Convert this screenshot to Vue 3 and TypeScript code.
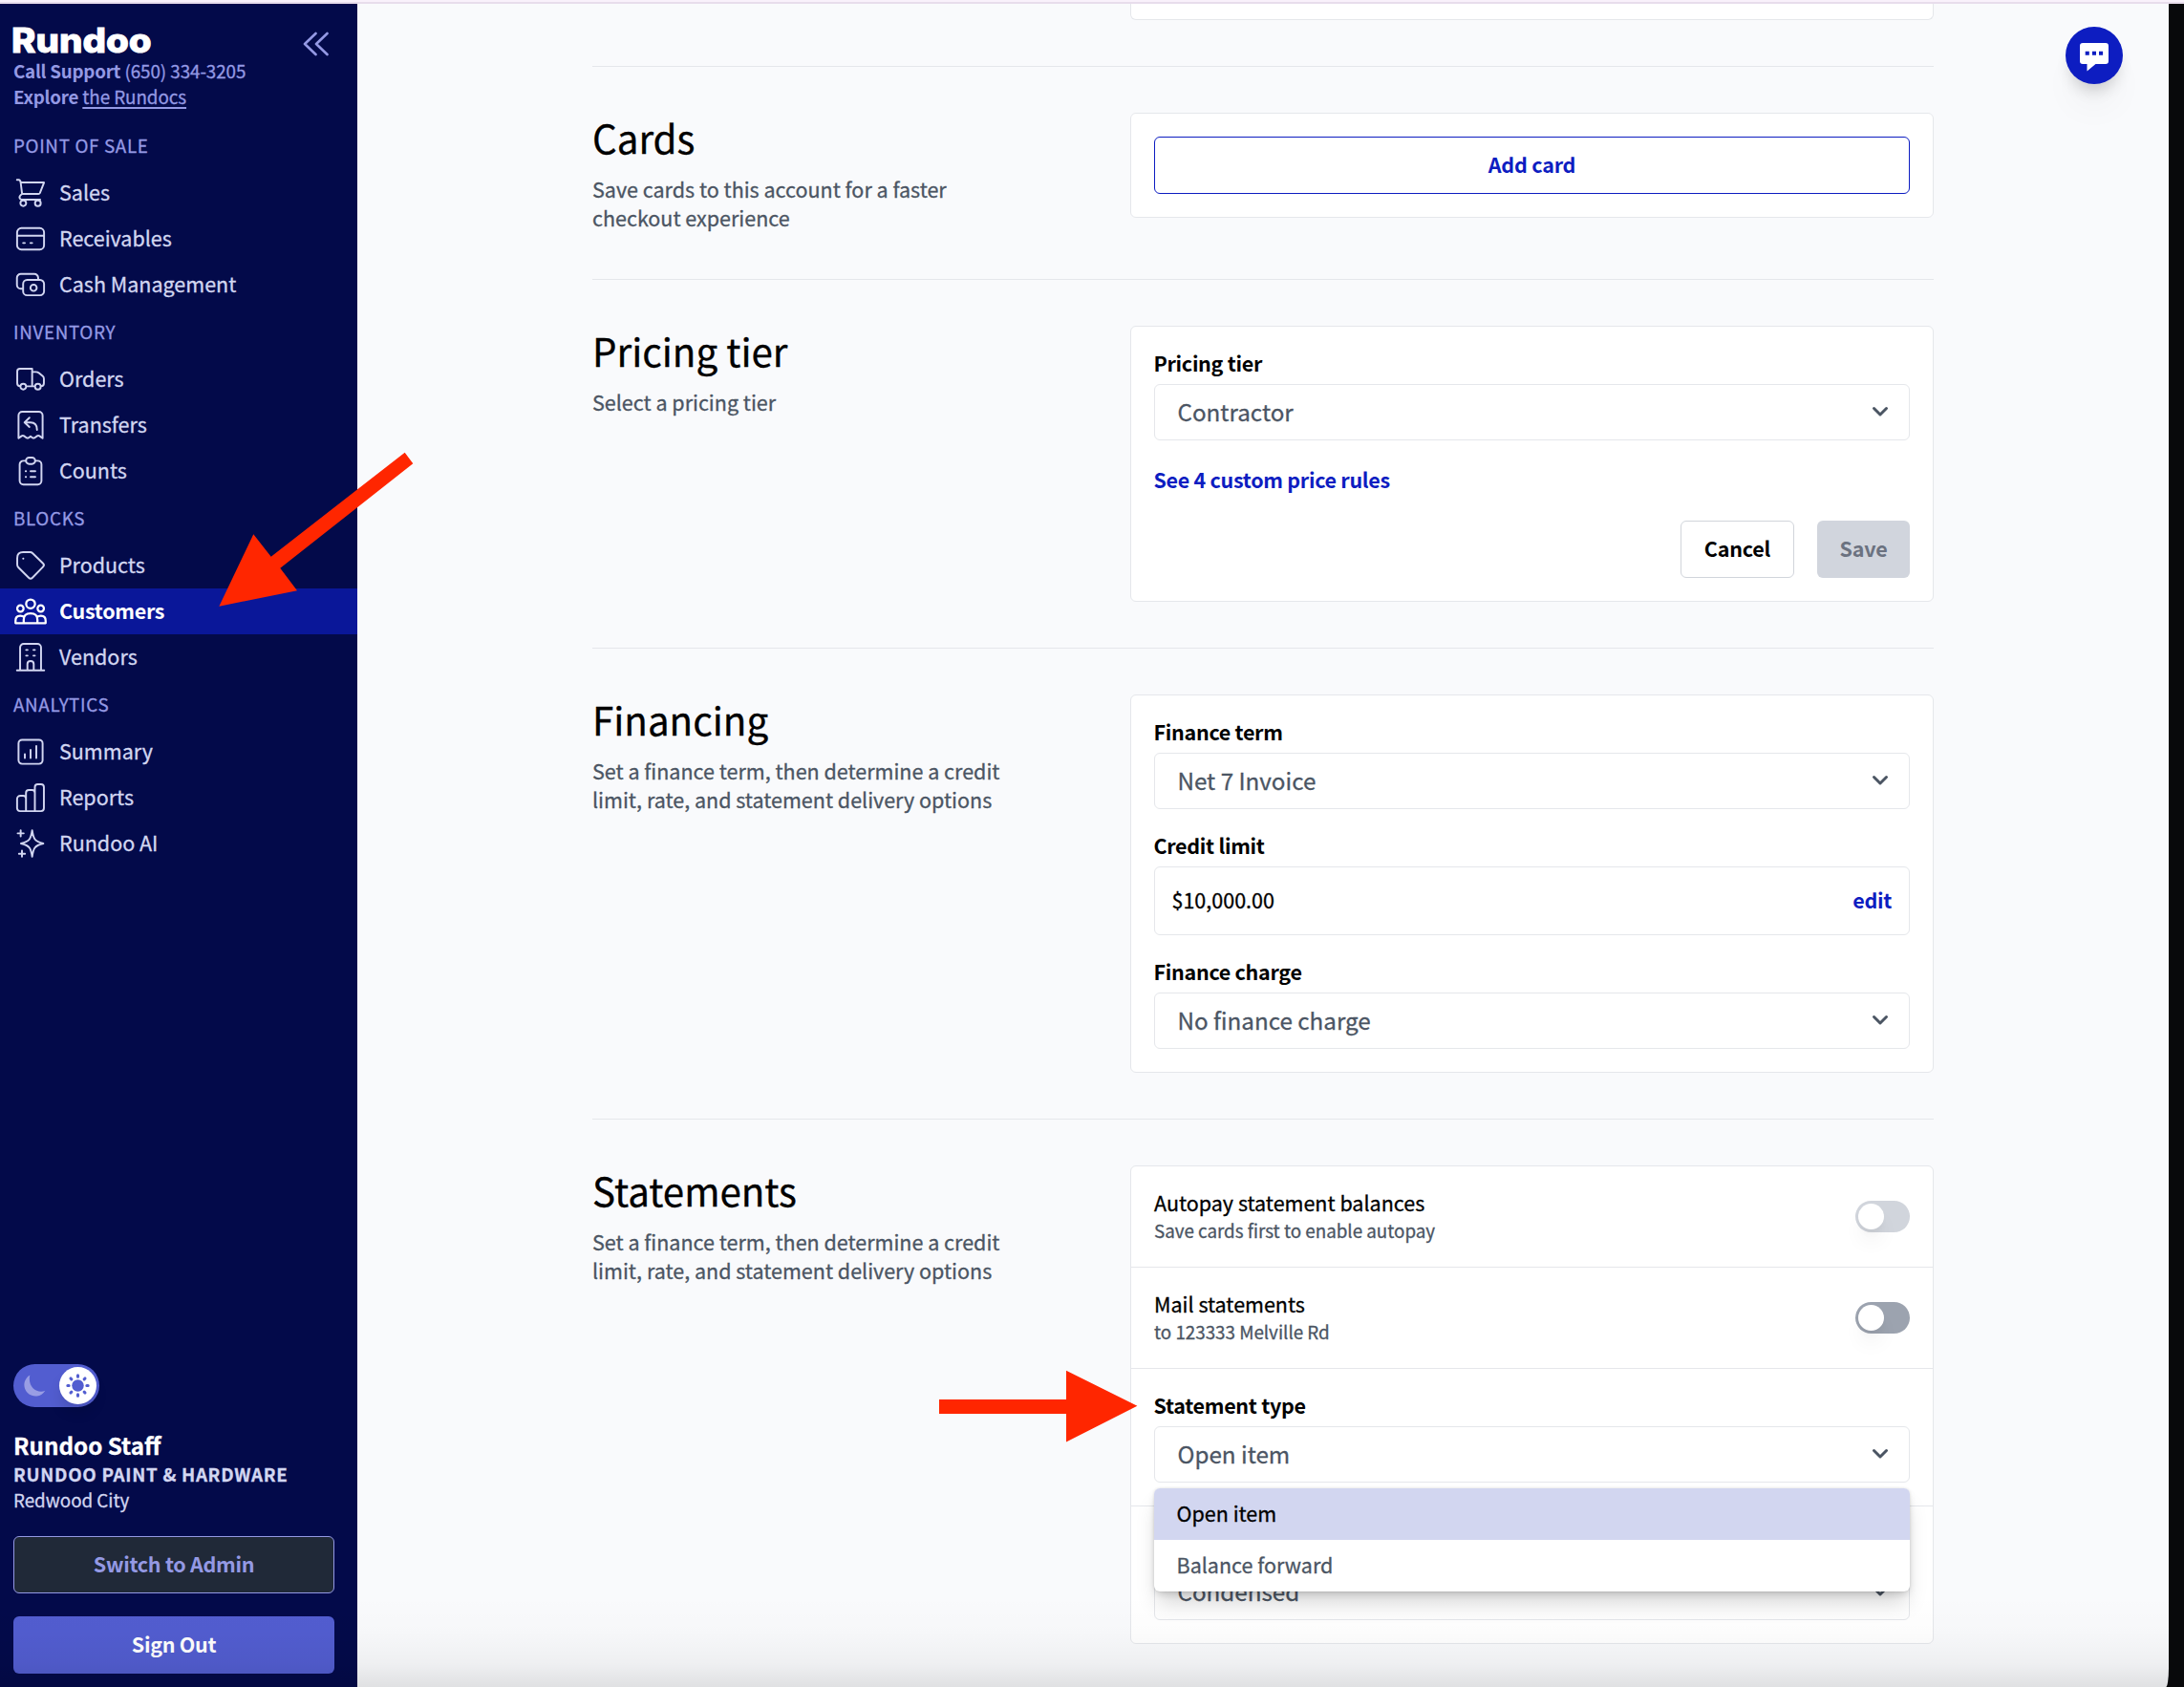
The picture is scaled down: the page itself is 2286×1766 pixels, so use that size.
<template>
  <div class="window">
    <div class="titlebar-edge" />
    <div class="app-shell">
      <aside class="sidebar">
        <header class="brand">
          <div class="brand-row">
            <span class="logo">Rundoo</span>
            <svg class="collapse" viewBox="0 0 28 26" aria-hidden="true">
              <path d="M14.5 2 3 13l11.500 11M26.500 2 15 13l11.500 11" />
            </svg>
          </div>
          <p class="brand-line"><b>Call Support</b> (650) 334-3205</p>
          <p class="brand-line"><b>Explore</b> <a class="docs-link">the Rundocs</a></p>
        </header>

        <nav class="nav">
          <section v-for="group in navGroups" :key="group.title">
            <h3 class="nav-title">{{ group.title }}</h3>
            <a
              v-for="item in group.items"
              :key="item.label"
              class="nav-item"
              :class="{ active: item.label === activeItem }"
            >
              <svg class="nav-icon" viewBox="0 0 24 24" aria-hidden="true">
                <path :d="item.icon" />
              </svg>
              <span>{{ item.label }}</span>
            </a>
          </section>
        </nav>

        <footer class="account">
          <div class="theme-toggle">
            <svg class="moon" viewBox="0 0 24 24" aria-hidden="true">
              <path d="M7.300.500A11.800 11.800 0 1 0 23.300 16.800C15 20.500 4.500 12.500 7.300.500z" />
            </svg>
            <span class="theme-knob">
              <svg viewBox="0 0 24 24" aria-hidden="true">
                <circle cx="12" cy="12" r="6" />
                <path
                  d="M12 1.800v1.200M12 21v1.200M1.800 12H3M21 12h1.200M4.800 4.800l.8.8M18.400 18.400l.8.8M4.800 19.200l.8-.8M18.400 5.600l.8-.8"
                />
              </svg>
            </span>
          </div>
          <p class="user-name">Rundoo Staff</p>
          <p class="store-name">RUNDOO PAINT &amp; HARDWARE</p>
          <p class="store-city">Redwood City</p>
          <button class="side-btn side-btn-outline">Switch to Admin</button>
          <button class="side-btn side-btn-solid">Sign Out</button>
        </footer>
      </aside>

      <main class="content">
        <div class="settings">
          <section class="setting previous">
            <div class="card" />
          </section>

          <section class="setting">
            <div class="intro">
              <h2>Cards</h2>
              <p>Save cards to this account for a faster checkout experience</p>
            </div>
            <div class="card card-padded">
              <button class="btn btn-primary-outline">Add card</button>
            </div>
          </section>

          <section class="setting">
            <div class="intro">
              <h2>Pricing tier</h2>
              <p>Select a pricing tier</p>
            </div>
            <div class="card card-padded">
              <label class="field-label">Pricing tier</label>
              <div class="select">
                <span>Contractor</span>
                <svg class="chevron" viewBox="0 0 18 12"><path d="M2.500 2.500 9 9l6.500-6.500" /></svg>
              </div>
              <a class="rules-link">See 4 custom price rules</a>
              <div class="actions">
                <button class="btn btn-cancel">Cancel</button>
                <button class="btn btn-save" disabled>Save</button>
              </div>
            </div>
          </section>

          <section class="setting">
            <div class="intro">
              <h2>Financing</h2>
              <p>Set a finance term, then determine a credit limit, rate, and statement delivery options</p>
            </div>
            <div class="card card-padded card-stack">
              <div>
                <label class="field-label">Finance term</label>
                <div class="select">
                  <span>Net 7 Invoice</span>
                  <svg class="chevron" viewBox="0 0 18 12"><path d="M2.500 2.500 9 9l6.500-6.500" /></svg>
                </div>
              </div>
              <div>
                <label class="field-label">Credit limit</label>
                <div class="limit-box">
                  <span>$10,000.00</span>
                  <a class="edit-link">edit</a>
                </div>
              </div>
              <div>
                <label class="field-label">Finance charge</label>
                <div class="select">
                  <span>No finance charge</span>
                  <svg class="chevron" viewBox="0 0 18 12"><path d="M2.500 2.500 9 9l6.500-6.500" /></svg>
                </div>
              </div>
            </div>
          </section>

          <section class="setting">
            <div class="intro">
              <h2>Statements</h2>
              <p>Set a finance term, then determine a credit limit, rate, and statement delivery options</p>
            </div>
            <div class="card">
              <div v-for="row in toggleRows" :key="row.title" class="card-row toggle-row">
                <div>
                  <p class="row-title">{{ row.title }}</p>
                  <p class="row-note">{{ row.note }}</p>
                </div>
                <span class="switch" :class="{ disabled: row.disabled }"><i class="knob" /></span>
              </div>
              <div class="card-row">
                <label class="field-label">Statement type</label>
                <div class="select select-open">
                  <span>{{ statementType }}</span>
                  <svg class="chevron" viewBox="0 0 18 12"><path d="M2.500 2.500 9 9l6.500-6.500" /></svg>
                  <ul class="menu">
                    <li
                      v-for="option in statementTypes"
                      :key="option"
                      :class="{ selected: option === statementType }"
                      @click="statementType = option"
                    >
                      {{ option }}
                    </li>
                  </ul>
                </div>
              </div>
              <div class="card-row format-row">
                <div class="select">
                  <span>Condensed</span>
                  <svg class="chevron" viewBox="0 0 18 12"><path d="M2.500 2.500 9 9l6.500-6.500" /></svg>
                </div>
              </div>
            </div>
          </section>
        </div>

        <button class="chat" aria-label="Chat">
          <svg viewBox="0 0 30 30" aria-hidden="true">
            <path
              fill-rule="evenodd"
              d="M3 0h24a3 3 0 0 1 3 3v16a3 3 0 0 1-3 3H16.500L7.500 29.500V22H3a3 3 0 0 1-3-3V3a3 3 0 0 1 3-3zM5.700 8.700v4.100h4.100V8.700zM12.900 8.700v4.100H17V8.700zM20 8.700v4.100h4.100V8.700z"
            />
          </svg>
        </button>
      </main>
    </div>
    <div class="bottom-fade" />

    <svg class="annotations" viewBox="0 0 2286 1766" aria-hidden="true">
      <polygon
        points="229.300,634.700 265.300,559.300 283.700,582.700 423.700,473.700 432.300,485.300 293.300,594.700 311,618.300"
      />
      <polygon points="983,1465 1116,1465 1116,1434.700 1190.400,1471.800 1116,1509.400 1116,1480 983,1480" />
    </svg>
  </div>
</template>

<script setup lang="ts">
import { ref } from "vue";

interface NavItem {
  label: string;
  /** Stroke path on a 24x24 grid */
  icon: string;
}

interface NavGroup {
  title: string;
  items: NavItem[];
}

interface ToggleRow {
  title: string;
  note: string;
  disabled?: boolean;
}

const activeItem = ref("Customers");

const navGroups: NavGroup[] = [
  {
    title: "POINT OF SALE",
    items: [
      {
        label: "Sales",
        icon: "M2.500 2.800h1.200c.9 0 1.200.4 1.400 1.900l1 8h11.500c.5 0 .7-.2.900-.6l2.900-7.400H5.100M6.100 12.700c-1.500 1-2 1.800-1.800 2.700.2.800.8 1.300 1.600 1.300h12.800M4.900 19.100a2 2 0 1 0 4 0a2 2 0 1 0-4 0M15.100 19.100a2 2 0 1 0 4 0a2 2 0 1 0-4 0",
      },
      {
        label: "Receivables",
        icon: "M5.600 4.500h12.800a3 3 0 0 1 3 3v9a3 3 0 0 1-3 3H5.600a3 3 0 0 1-3-3v-9a3 3 0 0 1 3-3zM2.600 9.800h18.800M6.800 14.900h1.200M11.900 14.900h1.200",
      },
      {
        label: "Cash Management",
        icon: "M9.600 8.700h9a2.800 2.800 0 0 1 2.800 2.800v5.100a2.800 2.800 0 0 1-2.800 2.800h-9a2.800 2.800 0 0 1-2.800-2.800v-5.100a2.800 2.800 0 0 1 2.800-2.800zM6.800 14.800H5.200a2.700 2.700 0 0 1-2.700-2.700V7.200a2.700 2.700 0 0 1 2.700-2.700h9.400a2.700 2.700 0 0 1 2.700 2.700v1.500M11.900 14.200a2.200 2.200 0 1 0 4.400 0a2.200 2.200 0 1 0-4.400 0",
      },
    ],
  },
  {
    title: "INVENTORY",
    items: [
      {
        label: "Orders",
        icon: "M4.900 16.900c-1.600 0-2.200-.6-2.200-2V6.500c0-1.200.6-1.800 1.800-1.800h8.600v12.200M13.100 6.900h2.600c.9 0 1.500.2 2.200.8l2.600 2.200c.6.5.8 1 .8 1.700v3.300c0 1.400-.6 2-2.100 2M8.900 16.900h6.200M4.900 17.100a2 2 0 1 0 4 0a2 2 0 1 0-4 0M15.100 17.100a2 2 0 1 0 4 0a2 2 0 1 0-4 0",
      },
      {
        label: "Transfers",
        icon: "M3.600 21.200V5.300a2.600 2.600 0 0 1 2.600-2.600h11.600a2.600 2.600 0 0 1 2.600 2.600v15.900l-2.200-1.600c-.6-.4-1-.4-1.600 0l-1.700 1.200c-.6.4-1 .4-1.600 0l-1.300-.9-1.300.9c-.6.4-1 .4-1.600 0l-1.700-1.200c-.6-.4-1-.4-1.600 0zM11.200 6.800 7.800 10.200l3.400 3.100M7.800 10.200H12c2.900 0 4.500 1.800 4.500 5.100",
      },
      {
        label: "Counts",
        icon: "M8.900 4.900H7a2.600 2.600 0 0 0-2.600 2.600v11.400A2.600 2.600 0 0 0 7 21.500h10a2.600 2.600 0 0 0 2.600-2.600V7.500A2.600 2.600 0 0 0 17 4.900h-1.900M11 2.600h2a2.200 2.200 0 0 1 0 4.500h-2a2.200 2.200 0 0 1 0-4.500zM8.600 12.100h.2M12 12.100h3.300M8.600 16.200h.2M12 16.200h3.300",
      },
    ],
  },
  {
    title: "BLOCKS",
    items: [
      {
        label: "Products",
        icon: "M2.700 6.800c0-2.700 1.400-4.100 4.100-4.100h4.800c.8 0 1.300.2 1.900.8l7.200 7c.8.8.8 1.600 0 2.400l-7.400 7.600c-.9.900-1.700.9-2.600 0l-7.200-7.200c-.6-.6-.8-1.100-.8-1.900zM6.850 7.100h.1",
      },
      {
        label: "Customers",
        icon: "M8.900 6.800a3.100 3.100 0 1 0 6.200 0a3.100 3.100 0 1 0-6.200 0M2.700 10a2.200 2.200 0 1 0 4.400 0a2.200 2.200 0 1 0-4.400 0M16.900 10a2.200 2.200 0 1 0 4.400 0a2.200 2.200 0 1 0-4.400 0M1.500 20.200v-1.600c0-2.200 1.200-3.500 3.300-3.500 1 0 1.900.2 2.600.9M22.500 20.200v-1.600c0-2.200-1.200-3.500-3.300-3.500-1 0-1.900.2-2.600.9M7.200 20.200v-2.400c0-2.700 1.800-4.400 4.800-4.400s4.800 1.700 4.800 4.400v2.400M1.500 20.200h21",
      },
      {
        label: "Vendors",
        icon: "M4.700 21.100V5.200a2.500 2.500 0 0 1 2.500-2.500h9.600a2.500 2.500 0 0 1 2.500 2.500v15.900M2.500 21.200h19M9.800 21.100v-4.400c0-1.300.6-2 2.200-2s2.200.7 2.200 2v4.400M8.900 6.900h1M14 6.900h1M8.900 10.900h1M14 10.900h1",
      },
    ],
  },
  {
    title: "ANALYTICS",
    items: [
      {
        label: "Summary",
        icon: "M6.100 3.600h11.800a2.500 2.500 0 0 1 2.500 2.500v11.800a2.500 2.500 0 0 1-2.500 2.500H6.100a2.500 2.500 0 0 1-2.500-2.500V6.100a2.500 2.500 0 0 1 2.500-2.500zM8 13.700v2.600M12 10.700v5.600M16 7.900v8.400",
      },
      {
        label: "Reports",
        icon: "M4.900 10.600h1.900a2 2 0 0 1 2 2v8.800H4.600a2 2 0 0 1-2-2v-6.500a2.300 2.300 0 0 1 2.300-2.300zM8.800 12.600V8.700a2 2 0 0 1 2-2h2.200a2 2 0 0 1 2 2v12.700H8.800zM15 8.700V4.700a2 2 0 0 1 2-2h2.300a2 2 0 0 1 2 2v14.700a2 2 0 0 1-2 2H15z",
      },
      {
        label: "Rundoo AI",
        icon: "M13.100 2.800c.9 5.800 1.500 7.700 7.800 9.200-6.300 1.500-6.900 3.400-7.800 9.200-.9-5.800-1.500-7.700-7.800-9.200 6.300-1.500 6.900-3.400 7.800-9.200zM5.100 2.800v4.200M3 4.900h4.200M6 17v4.200M3.900 19.100h4.200",
      },
    ],
  },
];

const toggleRows: ToggleRow[] = [
  {
    title: "Autopay statement balances",
    note: "Save cards first to enable autopay",
    disabled: true,
  },
  { title: "Mail statements", note: "to 123333 Melville Rd" },
];

const statementTypes = ["Open item", "Balance forward"];
const statementType = ref("Open item");
</script>

<style>
body {
  margin: 0;
  background: #08090b;
}
</style>

<style scoped>
.window {
  position: relative;
  display: flex;
  flex-direction: column;
  width: 2286px;
  height: 1766px;
  overflow: hidden;
  background: #08090b;
  color: #000;
  font-family: "Noto Sans CJK SC", "Noto Sans", sans-serif;
  font-size: 21.5px;
  line-height: 30px;
  -webkit-text-stroke: 0.3px currentColor;
}

p,
h2,
h3,
ul {
  margin: 0;
  padding: 0;
  font-weight: 400;
}

button {
  font: inherit;
  margin: 0;
}

.titlebar-edge {
  flex: none;
  box-sizing: border-box;
  height: 4px;
  background: #f9f1fb;
  border-bottom: 2px solid #e8ddec;
}

.app-shell {
  flex: 1;
  min-height: 0;
  display: flex;
  width: 2270px;
  overflow: hidden;
  background: #f9fafc;
  border-bottom-right-radius: 3px 20px;
}

/* Sidebar */
.sidebar {
  flex: none;
  box-sizing: border-box;
  width: 374px;
  display: flex;
  flex-direction: column;
  background: #030a4a;
}

.brand {
  padding: 0 30px 12px 14px;
  color: #9499e4;
}

.brand-row {
  display: flex;
  justify-content: space-between;
  align-items: flex-start;
  height: 57px;
}

.logo {
  margin-left: -2px;
  padding-top: 13px;
  color: #fff;
  font-family: Inter, sans-serif;
  font-weight: 800;
  font-size: 35px;
  line-height: 50px;
  transform: scaleX(1.1);
  transform-origin: left;
  -webkit-text-stroke: 0.9px currentColor;
}

.collapse {
  width: 28px;
  height: 26px;
  margin-top: 29px;
  fill: none;
  stroke: #9499e4;
  stroke-width: 2.6;
  stroke-linecap: round;
  stroke-linejoin: round;
}

.brand-line {
  font-size: 18.8px;
  line-height: 25px;
  padding-bottom: 2px;
  letter-spacing: -0.05px;
}

.brand-line b {
  letter-spacing: -0.25px;
  -webkit-text-stroke: 0;
}

.docs-link {
  text-decoration: underline;
  text-decoration-thickness: 2px;
  text-underline-offset: 3px;
}

.nav-title {
  padding: 12px 14px 14px;
  color: #9499e4;
  font-size: 18.8px;
  line-height: 25px;
  letter-spacing: 0.68px;
}

.nav-item {
  display: flex;
  align-items: center;
  gap: 12px;
  height: 48px;
  padding: 0 14px;
  color: #d2d6f1;
}

.nav-item span {
  padding-bottom: 2px;
}

.nav-item.active {
  background: #0a1799;
  color: #fff;
  font-weight: 700;
  letter-spacing: -0.3px;
  -webkit-text-stroke: 0;
}

.nav-icon {
  width: 36px;
  height: 36px;
  fill: none;
  stroke: currentColor;
  stroke-width: 1.3;
  stroke-linecap: round;
  stroke-linejoin: round;
}

.nav-item.active .nav-icon {
  stroke-width: 1.5;
}

.account {
  display: flex;
  flex-direction: column;
  margin-top: auto;
  padding: 0 24px 14px 14px;
}

.theme-toggle {
  box-sizing: border-box;
  display: flex;
  align-items: center;
  justify-content: space-between;
  width: 90px;
  height: 45px;
  margin-bottom: 24px;
  padding: 3px 3px 3px 10px;
  border-radius: 23px;
  background: #525dd0;
}

.moon {
  width: 24px;
  height: 24px;
  fill: #989de4;
}

.theme-knob {
  display: flex;
  align-items: center;
  justify-content: center;
  width: 39px;
  height: 39px;
  border-radius: 50%;
  background: #fff;
  box-shadow: 0 10px 15px -3px rgba(0, 0, 0, 0.15);
}

.theme-knob svg {
  width: 25px;
  height: 25px;
  fill: #525dd0;
  stroke: #525dd0;
  stroke-linecap: round;
  stroke-width: 3;
}

.theme-knob circle {
  stroke: none;
}

.user-name {
  padding: 1px 0 2px;
  color: #fff;
  font-size: 24.2px;
  font-weight: 700;
  line-height: 30px;
}

.store-name {
  padding-bottom: 2px;
  color: #d2d6f1;
  font-size: 18.8px;
  font-weight: 700;
  line-height: 25px;
  letter-spacing: 0.7px;
}

.store-city {
  padding-bottom: 2px;
  margin-bottom: 24px;
  color: #d2d6f1;
  font-size: 18.8px;
  line-height: 25px;
}

.side-btn {
  box-sizing: border-box;
  height: 60px;
  padding: 0 0 2px;
  border: 0;
  border-radius: 6px;
  font-weight: 700;
  letter-spacing: -0.3px;
  -webkit-text-stroke: 0;
}

.side-btn-outline {
  margin-bottom: 24px;
  border: 1px solid #9499e4;
  background: #202938;
  color: #9499e4;
}

.side-btn-solid {
  background: #525dd0;
  color: #fff;
}

/* Settings */
.content {
  position: relative;
  flex: 1;
}

.settings {
  width: 1404px;
  margin-left: 246px;
}

.setting {
  display: grid;
  grid-template-columns: 563px 841px;
  align-items: start;
  padding: 48px 0;
  border-top: 1px solid #e5e7eb;
}

.setting.previous {
  padding: 0 0 48px;
  border-top: 0;
}

.setting.previous .card {
  grid-column: 2;
  height: 17px;
  border-top: 0;
  border-radius: 0 0 6px 6px;
}

.intro h2 {
  margin-bottom: 11px;
  padding-bottom: 2px;
  font-size: 40.3px;
  line-height: 52px;
}

.intro p {
  width: 440px;
  padding-bottom: 1px;
  color: #4b5563;
}

.card {
  box-sizing: border-box;
  border: 1px solid #e5e7eb;
  border-radius: 6px;
  background: #fff;
}

.card-padded {
  padding: 24px;
}

.card-stack {
  display: grid;
  gap: 24px;
}

.btn {
  box-sizing: border-box;
  height: 60px;
  padding: 0 0 2px;
  border: 1px solid transparent;
  border-radius: 6px;
  background: #fff;
  font-weight: 700;
  letter-spacing: -0.2px;
  -webkit-text-stroke: 0;
}

.btn-primary-outline {
  display: block;
  width: 100%;
  border-color: #0d1dc1;
  color: #0d1dc1;
}

.btn-cancel {
  width: 119px;
  border-color: #d1d5db;
  color: #000;
}

.btn-save {
  width: 97px;
  background: #d1d5dd;
  color: #6b7280;
}

.field-label {
  display: block;
  margin-bottom: 6px;
  margin-left: -0.5px;
  padding-bottom: 2px;
  font-weight: 700;
  line-height: 28px;
  letter-spacing: -0.3px;
  -webkit-text-stroke: 0;
}

.select {
  position: relative;
  box-sizing: border-box;
  display: flex;
  align-items: center;
  justify-content: space-between;
  height: 59px;
  padding: 0 21px 2px 23.5px;
  border: 1px solid #e5e7eb;
  border-radius: 6px;
  color: #4b5563;
  font-size: 24.2px;
}

.chevron {
  width: 18px;
  height: 12px;
  fill: none;
  stroke: #4b5563;
  stroke-width: 3;
  stroke-linecap: round;
  stroke-linejoin: round;
}

.rules-link {
  display: block;
  margin-left: -0.5px;
  padding: 26px 0 28px;
  color: #0d1dc1;
  font-weight: 700;
  letter-spacing: -0.3px;
  -webkit-text-stroke: 0;
}

.actions {
  display: flex;
  justify-content: flex-end;
  gap: 24px;
}

.limit-box {
  box-sizing: border-box;
  display: flex;
  align-items: center;
  justify-content: space-between;
  height: 72px;
  padding: 0 18px 2px 17.5px;
  border: 1px solid #e5e7eb;
  border-radius: 6px;
}

.edit-link {
  color: #0d1dc1;
  font-weight: 700;
  letter-spacing: -0.3px;
  -webkit-text-stroke: 0;
}

.card-row {
  padding: 24px;
}

.card-row + .card-row {
  border-top: 1px solid #e5e7eb;
}

.toggle-row {
  display: flex;
  align-items: center;
  justify-content: space-between;
}

.row-title {
  padding-bottom: 2px;
  line-height: 28px;
}

.row-note {
  padding-bottom: 1px;
  color: #4b5563;
  font-size: 18.8px;
  line-height: 26px;
}

.switch {
  box-sizing: border-box;
  width: 57px;
  height: 33px;
  padding: 3px;
  border-radius: 17px;
  background: #9ca3af;
}

.switch.disabled {
  background: #d1d5dc;
}

.knob {
  display: block;
  width: 27px;
  height: 27px;
  border-radius: 50%;
  background: #fff;
  box-shadow: 0 15px 22px -4px rgba(0, 0, 0, 0.08), 0 6px 9px -3px rgba(0, 0, 0, 0.05);
}

.format-row {
  padding-top: 60px;
}

/* Dropdown menu */
.menu {
  position: absolute;
  z-index: 2;
  top: 64px;
  left: -1px;
  right: -1px;
  overflow: hidden;
  border-radius: 6px;
  background: #fff;
  box-shadow: 0 15px 22px -4px rgba(0, 0, 0, 0.17), 0 4px 9px -2px rgba(0, 0, 0, 0.16), 0 0 3px rgba(0, 0, 0, 0.12);
  list-style: none;
}

.menu li {
  box-sizing: border-box;
  height: 54px;
  padding: 11px 24px 0 23.5px;
  font-size: 21.5px;
  line-height: 30px;
}

.menu li.selected {
  background: #d2d6f0;
  color: #000;
}

.chat {
  position: absolute;
  top: 24px;
  right: 48px;
  display: flex;
  align-items: center;
  justify-content: center;
  width: 60px;
  height: 60px;
  padding: 3px 0 0;
  border: 0;
  border-radius: 50%;
  background: #0d1dc1;
  box-shadow: 0 30px 38px -8px rgba(0, 0, 0, 0.05), 0 12px 15px -5px rgba(0, 0, 0, 0.16);
}

.chat svg {
  width: 30px;
  height: 30px;
  fill: #fff;
}

.bottom-fade {
  position: absolute;
  left: 0;
  bottom: 0;
  width: 2270px;
  height: 96px;
  background: linear-gradient(
    to bottom,
    rgba(0, 0, 0, 0),
    rgba(0, 0, 0, 0.012) 40%,
    rgba(0, 0, 0, 0.045) 75%,
    rgba(0, 0, 0, 0.1)
  );
}

.annotations {
  position: absolute;
  top: 0;
  left: 0;
  width: 2286px;
  height: 1766px;
  fill: #ff2600;
  pointer-events: none;
}
</style>
